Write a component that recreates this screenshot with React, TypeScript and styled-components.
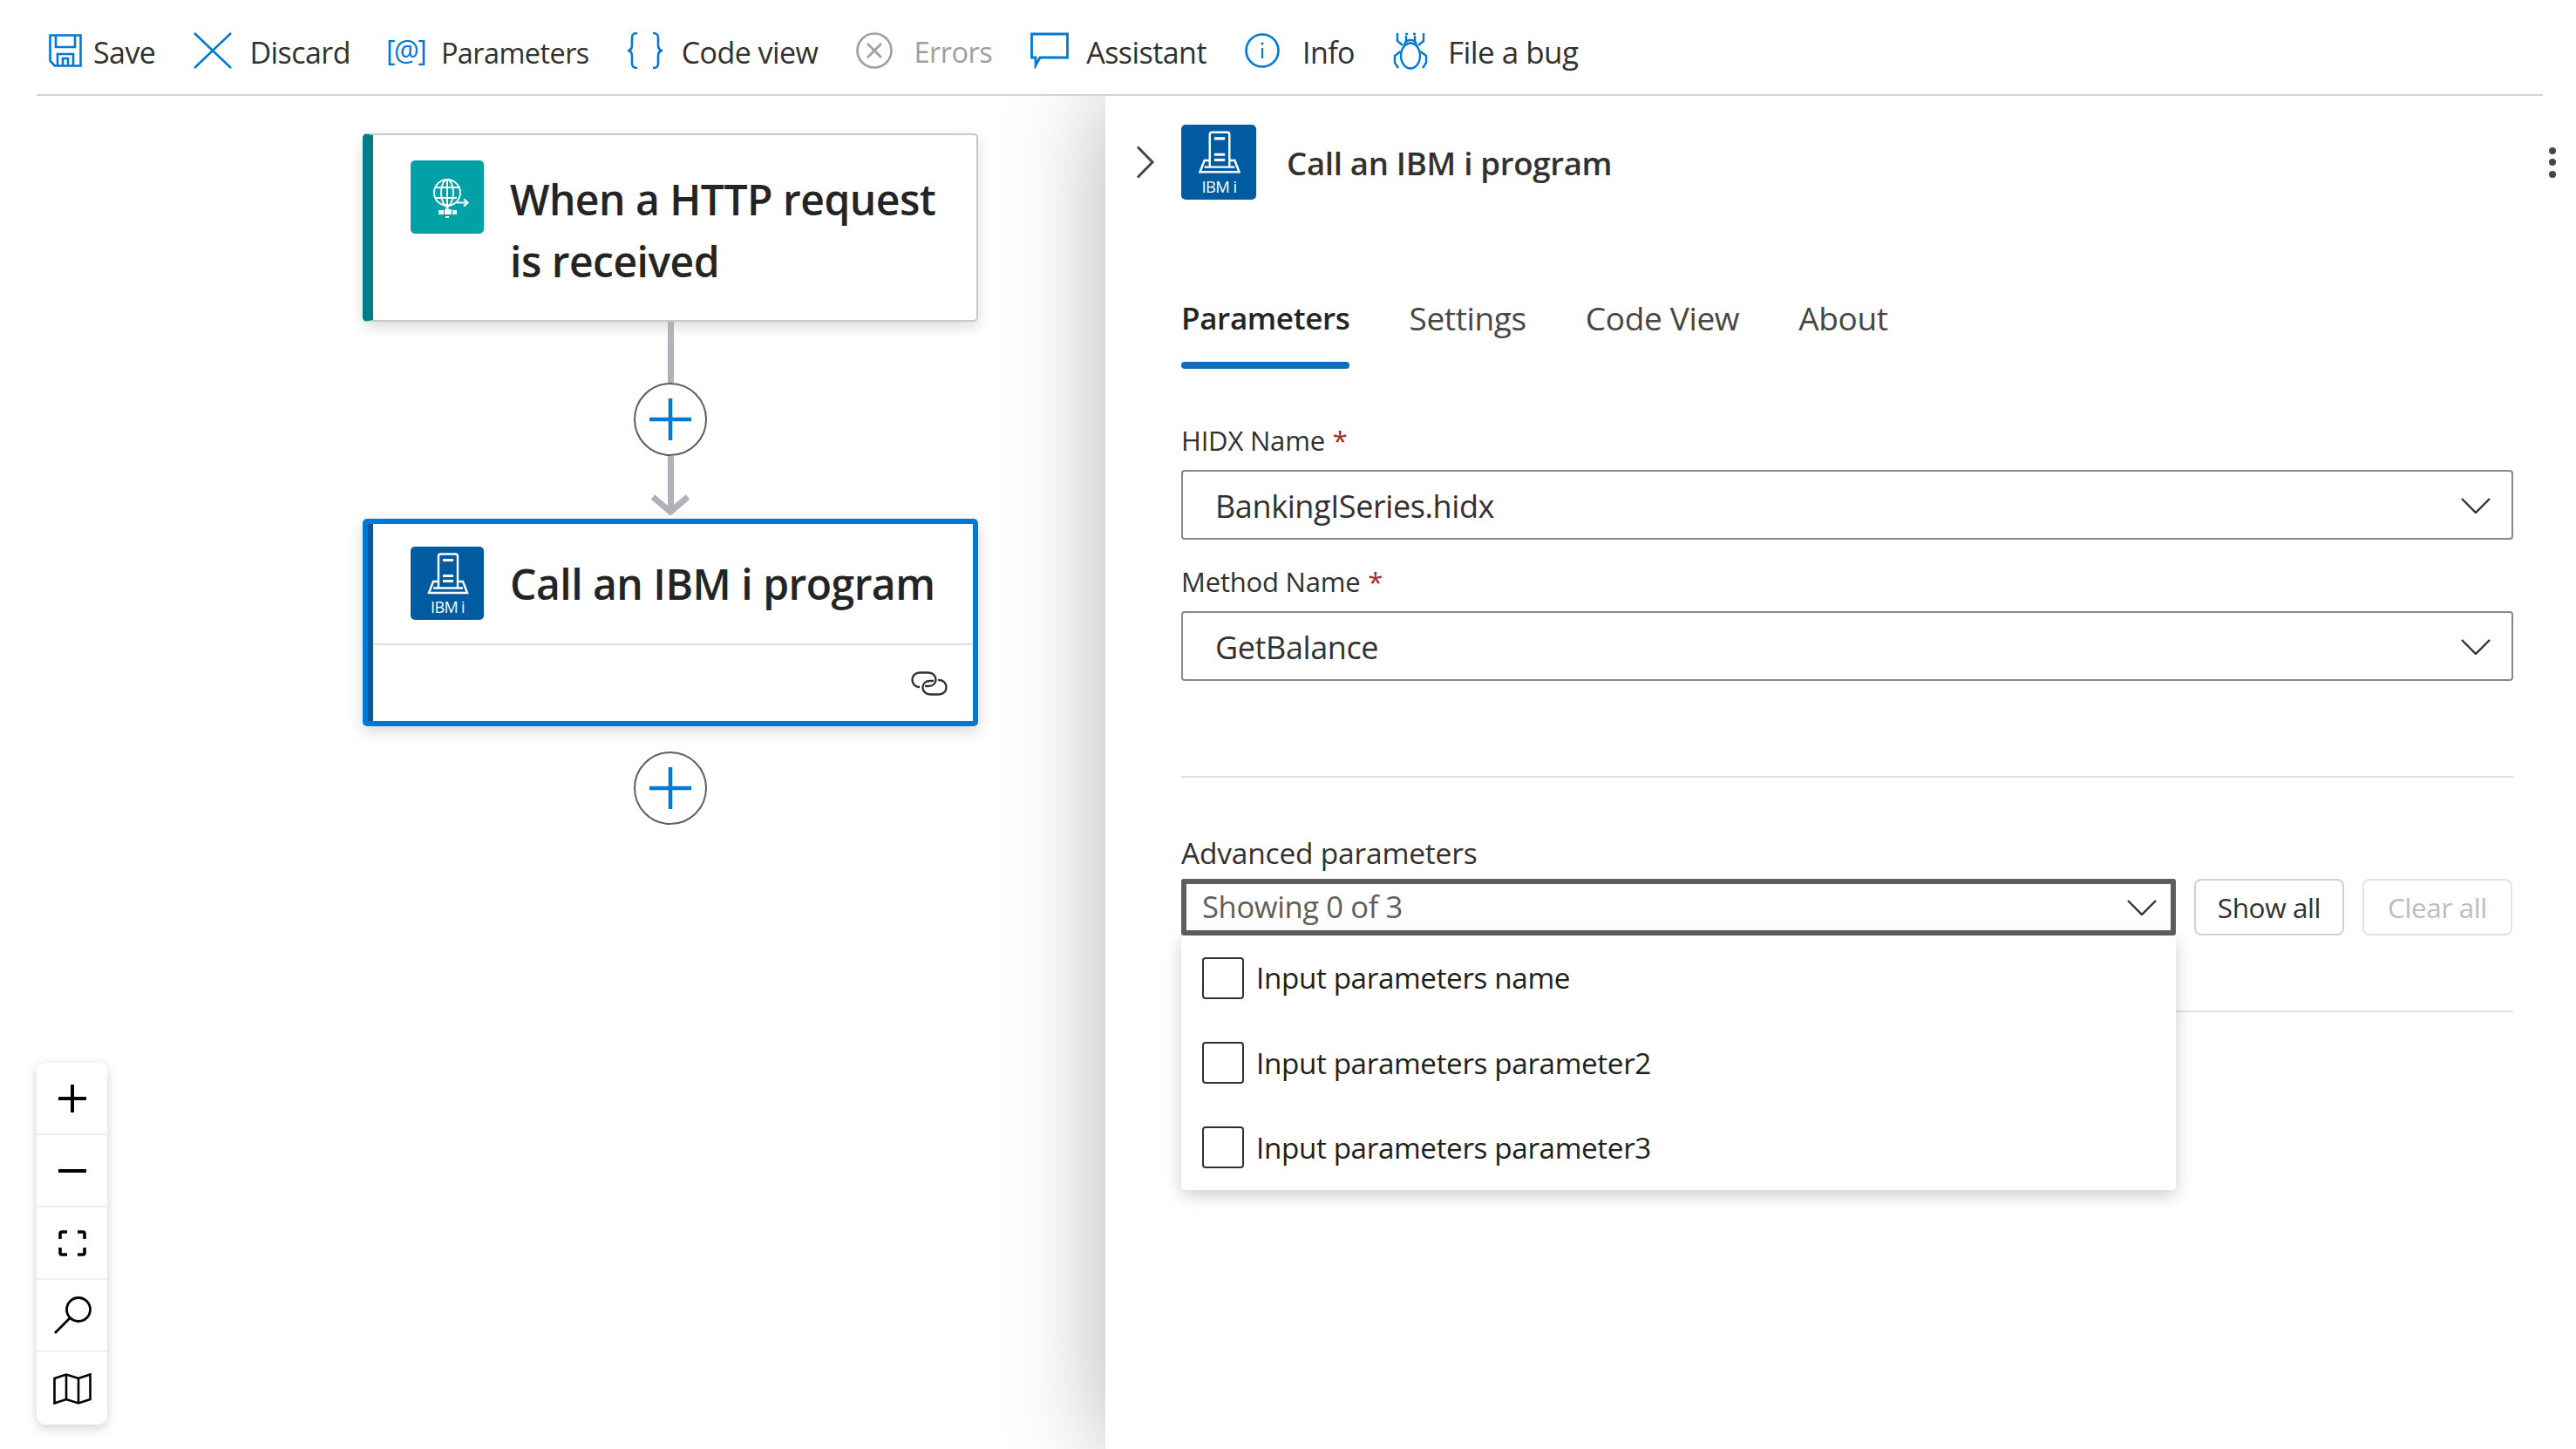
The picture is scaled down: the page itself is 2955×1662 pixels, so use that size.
import React from "react";
import styled, { createGlobalStyle } from "styled-components";

const Global = createGlobalStyle`
  html, body { margin: 0; padding: 0; background: #fff; }
  * { box-sizing: border-box; }
`;
const FONT = `"Open Sans", "Noto Sans", "Liberation Sans", sans-serif`;
const BLUE = "#0078d4";

const Page = styled.div`
  width: 2955px; height: 1662px; overflow: hidden; display: flex; flex-direction: column;
  font-family: ${FONT}; color: #323130; background: #fff;
`;
const Toolbar = styled.div`
  position: relative; z-index: 2; height: 110px; margin: 0 38px 0 42px; padding: 12px 0 0 14px;
  display: flex; align-items: center; gap: 44px; background: #fff;
  border-bottom: 2px solid #d4d4d4;
`;
const ToolButton = styled.div<{ $disabled?: boolean; $size?: number }>`
  display: flex; align-items: center; font-size: ${(p) => p.$size ?? 34}px; letter-spacing: -0.55px; line-height: 44px;
  color: ${(p) => (p.$disabled ? "#a19f9d" : "#323130")};
`;
const ToolIcon = styled.span<{ $w: number }>`
  width: ${(p) => p.$w}px; flex: none; display: flex; align-items: center; margin-top: -4px;
`;
const AtIcon = styled.span`
  font-size: 32px; color: ${BLUE}; letter-spacing: -1.4px; font-weight: 400; margin-left: -3px;
`;
const Body = styled.div`
  flex: 1; display: flex; min-height: 0; overflow: hidden;
`;
const Canvas = styled.div`
  position: relative; width: 1268px; flex: none; padding: 43px 0 0 416px;
`;
const Flow = styled.div`
  width: 706px; display: flex; flex-direction: column; align-items: center;
`;
const Card = styled.div<{ $selected?: boolean }>`
  width: 706px; display: flex; flex-direction: column; background: #fff; border-radius: 5px; flex: none;
  ${(p) =>
    p.$selected
      ? `height: 238px; border: 6px solid ${BLUE}; padding-left: 6px; box-shadow: inset 6px 0 0 #005ba1, 0 6px 18px rgba(0,0,0,.16);`
      : `height: 216px; border: 2px solid #c8c8c8; border-left: 12px solid #007c89; box-shadow: 0 6px 16px rgba(0,0,0,.14);`}
`;
const CardHead = styled.div<{ $selected?: boolean }>`
  display: flex; gap: 30px; align-items: flex-start;
  padding: ${(p) => (p.$selected ? "26px 0 0 43px" : "29px 0 0 43px")};
  ${(p) => p.$selected && "height: 139px; border-bottom: 2px solid #e1dfdd;"}
`;
const CardTitle = styled.div<{ $selected?: boolean }>`
  font-size: 48px; font-weight: 600; line-height: 71px; color: #242424; letter-spacing: -0.5px;
  width: 515px; margin-top: ${(p) => (p.$selected ? 7 : 9)}px;
  ${(p) => p.$selected && "white-space: nowrap;"}
`;
const CardFoot = styled.div`
  flex: 1; display: flex; justify-content: flex-end; align-items: center; padding: 0 29px 0 0;
`;
const Line = styled.div<{ $h: number }>`
  width: 7px; height: ${(p) => p.$h}px; background: #b1b1b7; flex: none;
`;
const AddCircle = styled.div<{ $mt?: number }>`
  width: 84px; height: 84px; border-radius: 50%; border: 2.5px solid #605e5c; background: #fff;
  display: flex; align-items: center; justify-content: center; flex: none;
  margin-top: ${(p) => p.$mt ?? 0}px;
`;
const Arrow = styled.svg`
  display: block; margin-top: -22px; margin-bottom: 4px; flex: none;
`;
const ZoomPanel = styled.div`
  position: absolute; left: 42px; top: 1109px; width: 81px; background: #fff; border-radius: 10px;
  box-shadow: 0 4px 14px rgba(0,0,0,.18); display: flex; flex-direction: column;
`;
const ZoomRow = styled.div<{ $last?: boolean }>`
  height: 83px; display: flex; align-items: center; justify-content: center;
  border-bottom: ${(p) => (p.$last ? "none" : "2px solid #efefef")};
`;
const Panel = styled.div`
  position: relative; flex: 1; background: #fff; padding: 33px 72px 0 87px;
  box-shadow: 0 0 110px rgba(0,0,0,.3);
`;
const PanelHead = styled.div`
  display: flex; align-items: center; height: 86px; margin-left: -52px; margin-right: -49px;
`;
const Chevron = styled.svg`
  width: 22px; height: 38px; margin-right: 30px; flex: none;
`;
const PanelTitle = styled.div`
  font-size: 36.6px; font-weight: 600; color: #323130; margin-left: 35px; flex: 1; letter-spacing: -0.3px; line-height: 46px; padding-top: 2px;
`;
const Kebab = styled.div`
  display: flex; flex-direction: column; gap: 5.5px;
  span { display: block; width: 8px; height: 8px; border-radius: 50%; background: #484644; }
`;
const TabRow = styled.div`
  display: flex; gap: 68px; margin-top: 98px;
`;
const Tab = styled.div<{ $active?: boolean }>`
  line-height: 76px; padding-bottom: 20px; position: relative; letter-spacing: -0.35px;
  font-size: ${(p) => (p.$active ? 35 : 37)}px;
  font-weight: ${(p) => (p.$active ? 600 : 400)};
  color: ${(p) => (p.$active ? "#242424" : "#484644")};
  ${(p) =>
    p.$active &&
    `&::after { content: ""; position: absolute; left: 0; right: 0; bottom: 0; height: 8px; border-radius: 4px; background: #0f6cbd; }`}
`;
const Label = styled.div<{ $mt: number; $size?: number }>`
  font-size: ${(p) => p.$size ?? 31}px; line-height: 40px; margin-top: ${(p) => p.$mt}px; letter-spacing: -0.2px; color: #323130;
  em { font-style: normal; color: #a4262c; margin-left: 1px; }
`;
const Select = styled.div`
  height: 80px; margin-top: 14px; border: 2px solid #8a8886; border-radius: 4px; padding: 2px 24px 0 37px;
  display: flex; align-items: center; justify-content: space-between; font-size: 36px; letter-spacing: -0.4px; color: #323130;
`;
const Divider = styled.div<{ $mt: number }>`
  height: 2px; background: #e1e1e1; margin-top: ${(p) => p.$mt}px;
`;
const AdvRow = styled.div`
  display: flex; gap: 21px; margin-top: 10px;
`;
const Combo = styled.div`
  position: relative; width: 1141px; height: 65px; border: 6px solid #605e5c; border-radius: 3px;
  display: flex; align-items: center; justify-content: space-between; padding: 0 16px 3px 18px;
  font-size: 34.5px; letter-spacing: -0.35px; color: #605e5c;
`;
const ComboChev = styled.span`
  display: flex; padding-top: 3px;
`;
const Dropdown = styled.div`
  position: absolute; left: -6px; top: 59px; width: 1141px; height: 292px; background: #fff; z-index: 3;
  border-radius: 0 0 4px 4px; box-shadow: 0 6px 20px rgba(0,0,0,.2); padding-left: 24px;
`;
const Option = styled.div`
  height: 97.4px; display: flex; align-items: center; gap: 14px; font-size: 33.2px; letter-spacing: -0.35px; color: #201f1e;
`;
const Check = styled.span`
  width: 48px; height: 48px; border: 2.5px solid #323130; border-radius: 4px; flex: none;
`;
const Btn = styled.div<{ $disabled?: boolean }>`
  width: 172px; height: 65px; border-radius: 8px; display: flex; align-items: center; justify-content: center;
  font-size: 31.5px; letter-spacing: -0.4px; font-weight: 400;
  border: 2.5px solid ${(p) => (p.$disabled ? "#e3e3e3" : "#d1d1d1")};
  color: ${(p) => (p.$disabled ? "#bdbdbd" : "#323130")};
`;

const Plus = ({ c = BLUE, s = 48, w = 4.5 }: { c?: string; s?: number; w?: number }) => (
  <svg width={s} height={s} viewBox="0 0 48 48">
    <path d="M24 0V48M0 24H48" stroke={c} strokeWidth={w * (48 / s)} fill="none" />
  </svg>
);
const SelectChev = () => (
  <svg width="34" height="18" viewBox="0 0 34 18" fill="none">
    <path d="M1 1L17 17L33 1" stroke="#323130" strokeWidth="2.4" />
  </svg>
);
const IbmIcon = ({ size }: { size: number }) => (
  <svg width={size} height={size} viewBox="0 0 84 84" style={{ flex: "none" }}>
    <rect width="84" height="84" rx="5" fill="#005ba1" />
    <g fill="none" stroke="#fff" strokeWidth="2.4">
      <path d="M32 47V11a2.5 2.5 0 0 1 2.5-2.5h17a2.5 2.5 0 0 1 2.5 2.5V47" />
      <path d="M32 40h-6l-5 13h44l-5-13h-6" />
      <path d="M26 47.5h34" />
    </g>
    <path d="M37 14h12v3H37zM37 32h12v3H37zM37 38h12v3H37z" fill="#fff" />
    <text x="42.5" y="76" textAnchor="middle" fill="#fff" fontSize="18" fontFamily={FONT} letterSpacing="-0.6">IBM i</text>
  </svg>
);
const HttpIcon = () => (
  <svg width="84" height="84" viewBox="0 0 84 84" style={{ flex: "none" }}>
    <rect width="84" height="84" rx="5" fill="#01a1a7" />
    <g fill="none" stroke="#fff" strokeWidth="2">
      <circle cx="42" cy="37" r="15" />
      <ellipse cx="42" cy="37" rx="7" ry="15" />
      <path d="M42 22V52M28.5 31H55.5M28.5 43H53" />
      <path d="M42 52V57" strokeWidth="3" />
      <path d="M53 48.5H65M61 44.5L65.5 48.5L61 52.5" strokeWidth="2.2" />
    </g>
    <path d="M32 57h6v5h-6zM39 56h8v6h-8zM48 57h5v5h-5zM40 64h4v2h-4z" fill="#fff" />
  </svg>
);
const LinkIcon = () => (
  <svg width="42" height="28" viewBox="0 0 42 28" fill="none" stroke="#323130" strokeWidth="2.4">
    <path d="M9 18H10C4.5 18 1.5 14 1.5 9.5S5 1.5 10 1.5H20C25 1.5 28.5 5 28.5 9.5S25 17 20 17H17" strokeLinecap="round" />
    <path d="M32 10C37.5 10 40.5 14 40.5 18.5S37 26.5 32 26.5H22C17 26.5 13.5 23 13.5 18.5S17 11 22 11H25" strokeLinecap="round" />
  </svg>
);

export default function App() {
  return (
    <Page>
      <Global />
      <Toolbar>
        <ToolButton>
          <ToolIcon $w={51}>
            <svg width="38" height="38" viewBox="0 0 38 38" fill="none" stroke={BLUE} strokeWidth="2.6">
              <path d="M1.5 1.5H36.5V36.5H7L1.5 31Z" />
              <path d="M8 1.5V15H30V1.5" />
              <path d="M10 36.5V23H28V36.5M16 36.5V28H22V36.5" />
            </svg>
          </ToolIcon>
          Save
        </ToolButton>
        <ToolButton>
          <ToolIcon $w={64}>
            <svg width="44" height="42" viewBox="0 0 44 42" fill="none" stroke={BLUE} strokeWidth="2.6">
              <path d="M1 1L43 41M43 1L1 41" />
            </svg>
          </ToolIcon>
          Discard
        </ToolButton>
        <ToolButton $size={32.4}>
          <ToolIcon $w={60}>
            <AtIcon>[@]</AtIcon>
          </ToolIcon>
          Parameters
        </ToolButton>
        <ToolButton>
          <ToolIcon $w={62}>
            <svg width="40" height="42" viewBox="0 0 40 42" fill="none" stroke={BLUE} strokeWidth="2.6">
              <path d="M11 1C6 1 5 3 5 7V15C5 18 4 20 1 21C4 22 5 24 5 27V35C5 39 6 41 11 41" />
              <path d="M29 1C34 1 35 3 35 7V15C35 18 36 20 39 21C36 22 35 24 35 27V35C35 39 34 41 29 41" />
            </svg>
          </ToolIcon>
          Code view
        </ToolButton>
        <ToolButton $disabled $size={32.6}>
          <ToolIcon $w={66}>
            <svg width="42" height="42" viewBox="0 0 42 42" fill="none" stroke="#a19f9d" strokeWidth="2.6">
              <circle cx="21" cy="21" r="19.5" />
              <path d="M13 13L29 29M29 13L13 29" />
            </svg>
          </ToolIcon>
          Errors
        </ToolButton>
        <ToolButton>
          <ToolIcon $w={64}>
            <svg width="44" height="42" viewBox="0 0 44 42" fill="none" stroke={BLUE} strokeWidth="2.8">
              <path d="M1.5 2H42.5V29H11L6 38V29H1.5Z" />
            </svg>
          </ToolIcon>
          Assistant
        </ToolButton>
        <ToolButton>
          <ToolIcon $w={66}>
            <svg width="40" height="40" viewBox="0 0 40 40" fill="none" stroke={BLUE} strokeWidth="2.6">
              <circle cx="20" cy="20" r="18.5" />
              <path d="M20 17V29" strokeWidth="2" />
              <circle cx="20" cy="12" r="1.5" fill={BLUE} stroke="none" />
            </svg>
          </ToolIcon>
          Info
        </ToolButton>
        <ToolButton $size={35}>
          <ToolIcon $w={63}>
            <svg width="40" height="44" viewBox="0 0 40 44" fill="none" stroke={BLUE} strokeWidth="2.4">
              <ellipse cx="20" cy="28" rx="11" ry="14.5" />
              <path d="M13 17C13 12 16 10 20 10S27 12 27 17" />
              <path d="M15 11V5M25 11V5M14 3H17M23 3H26" />
              <path d="M5 2V11L11 16M35 2V11L29 16" />
              <path d="M8.5 23L2 28V36L6 42M31.5 23L38 28V36L34 42" />
            </svg>
          </ToolIcon>
          File a bug
        </ToolButton>
      </Toolbar>
      <Body>
        <Canvas>
          <Flow>
            <Card>
              <CardHead>
                <HttpIcon />
                <CardTitle>When a HTTP request is received</CardTitle>
              </CardHead>
            </Card>
            <Line $h={70} />
            <AddCircle>
              <Plus />
            </AddCircle>
            <Line $h={66} />
            <Arrow width="46" height="24" viewBox="0 0 46 24" fill="none">
              <path d="M3 3L23 20L43 3" stroke="#b1b1b7" strokeWidth="7" />
            </Arrow>
            <Card $selected>
              <CardHead $selected>
                <IbmIcon size={84} />
                <CardTitle $selected>Call an IBM i program</CardTitle>
              </CardHead>
              <CardFoot>
                <LinkIcon />
              </CardFoot>
            </Card>
            <AddCircle $mt={29}>
              <Plus />
            </AddCircle>
          </Flow>
          <ZoomPanel>
            <ZoomRow>
              <Plus c="#000" s={32} w={4} />
            </ZoomRow>
            <ZoomRow>
              <svg width="32" height="32" viewBox="0 0 32 32">
                <path d="M0 16H32" stroke="#000" strokeWidth="4" />
              </svg>
            </ZoomRow>
            <ZoomRow>
              <svg width="32" height="30" viewBox="0 0 32 30" fill="none" stroke="#000" strokeWidth="3.6">
                <path d="M2 10V4a2 2 0 0 1 2-2H10M22 2H28a2 2 0 0 1 2 2V10M30 20V26a2 2 0 0 1-2 2H22M10 28H4a2 2 0 0 1-2-2V20" />
              </svg>
            </ZoomRow>
            <ZoomRow>
              <svg width="44" height="44" viewBox="0 0 44 44" fill="none" stroke="#000" strokeWidth="2.8">
                <circle cx="29" cy="15" r="13.5" />
                <path d="M19.5 24.5L2 42" />
              </svg>
            </ZoomRow>
            <ZoomRow $last>
              <svg width="44" height="36" viewBox="0 0 44 36" fill="none" stroke="#000" strokeWidth="2.6">
                <path d="M1.5 6L15 1.5L29 6L42.5 1.5V30L29 34.5L15 30L1.5 34.5Z" />
                <path d="M15 1.5V30M29 6V34.5" />
              </svg>
            </ZoomRow>
          </ZoomPanel>
        </Canvas>
        <Panel>
          <PanelHead>
            <Chevron viewBox="0 0 22 38" fill="none">
              <path d="M2 1.5L19 19L2 36.5" stroke="#484644" strokeWidth="3" />
            </Chevron>
            <IbmIcon size={86} />
            <PanelTitle>Call an IBM i program</PanelTitle>
            <Kebab>
              <span />
              <span />
              <span />
            </Kebab>
          </PanelHead>
          <TabRow>
            <Tab $active>Parameters</Tab>
            <Tab>Settings</Tab>
            <Tab>Code View</Tab>
            <Tab>About</Tab>
          </TabRow>
          <Label $mt={62}>
            HIDX Name <em>*</em>
          </Label>
          <Select>
            BankingISeries.hidx
            <SelectChev />
          </Select>
          <Label $mt={28}>
            Method Name <em>*</em>
          </Label>
          <Select>
            GetBalance
            <SelectChev />
          </Select>
          <Divider $mt={109} />
          <Label $mt={66} $size={33.5}>Advanced parameters</Label>
          <AdvRow>
            <Combo>
              Showing 0 of 3
              <ComboChev>
                <SelectChev />
              </ComboChev>
              <Dropdown>
                <Option>
                  <Check />
                  Input parameters name
                </Option>
                <Option>
                  <Check />
                  Input parameters parameter2
                </Option>
                <Option>
                  <Check />
                  Input parameters parameter3
                </Option>
              </Dropdown>
            </Combo>
            <Btn>Show all</Btn>
            <Btn $disabled>Clear all</Btn>
          </AdvRow>
          <Divider $mt={86} />
        </Panel>
      </Body>
    </Page>
  );
}
